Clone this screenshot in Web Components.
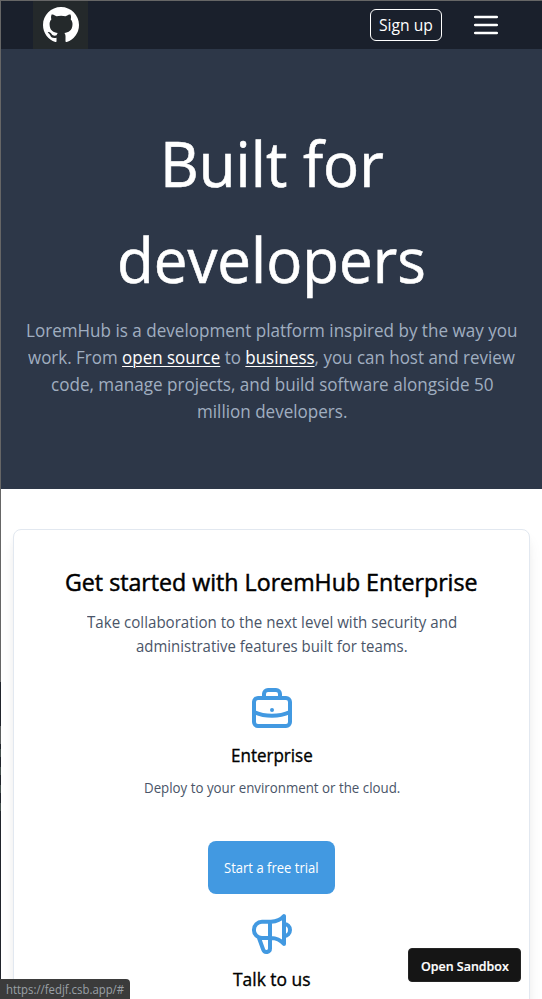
<!DOCTYPE html>
<html lang="en"><head><meta charset="utf-8"><title>LoremHub</title>
<style>html,body{margin:0;height:999px;overflow:hidden;background:#fff;font-family:"Open Sans","Noto Sans",sans-serif}</style></head>
<body><hub-page></hub-page>
<script>
const define = (name, html) => customElements.define(name, class extends HTMLElement {
  constructor(){ super(); this.attachShadow({mode:'open'}).innerHTML = html; }
});

// One line of text, condensed horizontally to the width given in `w`.
customElements.define('text-line', class extends HTMLElement {
  constructor(){
    super();
    this.attachShadow({mode:'open'}).innerHTML = `<style>:host{display:block;margin:0 auto}span{display:inline-block;white-space:nowrap;transform-origin:0 0;vertical-align:top}</style><span><slot></slot></span>`;
  }
  connectedCallback(){
    const s = +this.getAttribute('s'), w = +this.getAttribute('w'), lh = this.getAttribute('lh') || s*1.5;
    const k = s * 0.98, span = this.shadowRoot.querySelector('span');
    this.style.cssText = `width:${w}px;height:${lh}px;line-height:${lh}px;font-size:${k}px;text-align:left`;
    const dy = s > 60 ? 2 : 0;
    span.style.transform = `translateY(${dy}px) scaleX(${w / span.offsetWidth})`;
  }
});

define('hub-logo', `<style>:host{display:flex;width:55px;height:48px;background:#24292b;align-items:center;justify-content:center}</style>
<svg width="36" height="36" viewBox="0 0 16 16" fill="#fff"><path d="M8 0C3.58 0 0 3.58 0 8c0 3.54 2.29 6.53 5.47 7.59.4.07.55-.17.55-.38 0-.19-.01-.82-.01-1.49-2.01.37-2.53-.49-2.69-.94-.09-.23-.48-.94-.82-1.13-.28-.15-.68-.52-.01-.53.63-.01 1.08.58 1.23.82.72 1.21 1.87.87 2.33.66.07-.52.28-.87.51-1.07-1.78-.2-3.64-.89-3.64-3.95 0-.87.31-1.59.82-2.15-.08-.2-.36-1.02.08-2.12 0 0 .67-.21 2.2.82.64-.18 1.32-.27 2-.27s1.36.09 2 .27c1.53-1.04 2.2-.82 2.2-.82.44 1.1.16 1.92.08 2.12.51.56.82 1.27.82 2.15 0 3.07-1.87 3.75-3.65 3.95.29.25.54.73.54 1.48 0 1.07-.01 1.93-.01 2.2 0 .21.15.46.55.38A8.01 8.01 0 0 0 16 8c0-4.42-3.58-8-8-8z"/></svg>`);

define('nav-bar', `<style>:host{display:flex;height:48px;background:#1a202c;align-items:center;padding:0 44px 0 32px;color:#fff}
button{font:inherit;color:inherit;background:none;border:1px solid #fff;border-radius:6px;width:72px;height:32px;box-sizing:border-box;padding:0;margin:0 32px 0 auto}
svg{display:block}</style>
<hub-logo></hub-logo><button><text-line s="16" w="54" lh="29">Sign up</text-line></button>
<svg width="24" height="24" stroke="#fff" stroke-width="2.6" stroke-linecap="round"><path d="M1.200 4h21.600M1.200 12h21.600M1.200 20h21.600"/></svg>`);

define('hero-banner', `<style>:host{display:block;background:#2d3748;height:440px;box-sizing:border-box;padding-top:64px;color:#fff}
p{margin:12px 0 0;color:#a0aec0}h1{font-weight:400;margin:0;-webkit-text-stroke:.6px #fff}a{color:#fff;text-decoration:underline;text-decoration-thickness:1px;text-underline-offset:2px}</style>
<h1><text-line s="64" w="224">Built for</text-line><text-line s="64" w="309">developers</text-line></h1>
<p><text-line s="18" w="491">LoremHub is a development platform inspired by the way you</text-line>
<text-line s="18" w="487">work. From <a>open source</a> to <a>business</a>, you can host and review</text-line>
<text-line s="18" w="442">code, manage projects, and build software alongside 50</text-line>
<text-line s="18" w="150">million developers.</text-line></p>`);

define('line-icon', `<style>:host{display:block;width:40px;height:40px;margin:0 auto}::slotted(svg){display:block}</style><slot></slot>`);

define('feature-item', `<style>:host{display:block}h3{font-weight:500;margin:14px 0 0;color:#000;-webkit-text-stroke:.35px #000}</style><slot name="icon"></slot><h3><slot name="title"></slot></h3><slot></slot>`);

define('start-card', `<style>:host{display:block;margin:40px 12px 0;box-sizing:border-box;height:700px;border:1px solid #e2e8f0;border-radius:8px;box-shadow:0 10px 15px -3px #0000001a,0 4px 6px -2px #0000000d;background:#fff;padding-top:34px}
h2{font-weight:500;margin:0;color:#000;-webkit-text-stroke:.5px #000}.muted{color:#4a5568}.lead{margin:10px 0 30px}
button{display:block;border:0;background:#4299e1;color:#fff;border-radius:8px;width:127px;height:53px;margin:43px auto 18px;padding:0;font:inherit}
.desc{margin-top:8px}svg{overflow:visible;fill:none;stroke:#4299e1;stroke-width:4;stroke-linejoin:round;stroke-linecap:round}</style>
<h2><text-line s="24" w="413">Get started with LoremHub Enterprise</text-line></h2>
<div class="muted lead"><text-line s="16" w="370">Take collaboration to the next level with security and</text-line><text-line s="16" w="272">administrative features built for teams.</text-line></div>
<feature-item><line-icon slot="icon"><svg width="40" height="40"><rect x="2" y="10" width="36" height="28" rx="4"/><path d="M12 10V6a4 4 0 0 1 4-4h8a4 4 0 0 1 4 4v4M2 24c11 5 25 5 36 0M20 22h.01"/></svg></line-icon>
<text-line slot="title" s="18" w="82">Enterprise</text-line>
<div class="muted desc"><text-line s="14" w="256">Deploy to your environment or the cloud.</text-line></div></feature-item>
<button><text-line s="14" w="95">Start a free trial</text-line></button>
<feature-item><line-icon slot="icon"><svg width="40" height="40" viewBox="0 -2 40 40"><path d="M32 2v28c-3.500-4-8-6-13-6h-9a8 8 0 0 1 0-16.200h9C24 7.500 29 5.500 32 2zM18 8v26.500a3.500 3.500 0 0 1-6.800 1.200L7 24M32 10a6 6 0 0 1 0 12"/></svg></line-icon>
<text-line slot="title" s="18" w="77">Talk to us</text-line></feature-item>`);

define('sandbox-button', `<style>:host{position:absolute;left:408px;top:948px;width:113px;height:34px;box-sizing:border-box;border:1px solid #242424;border-radius:4px;background:#151515;color:#fff;font-weight:600;padding-top:1px;-webkit-text-stroke:.2px #fff}</style><text-line s="13" w="88" lh="32">Open Sandbox</text-line>`);
define('status-tip', `<style>:host{position:absolute;left:0;top:979px;width:130px;height:20px;background:#3b3b3b;border-radius:0 4px 0 0;color:#9aa0a6}</style><text-line s="12" w="118" lh="20">https://fedjf.csb.app/#</text-line>`);
define('window-edge', `<style>:host{position:absolute;left:0;top:0;width:1px;height:999px;background:linear-gradient(#666 682px,#20242b 682px 726px,#5c5f5f 726px 744px,#20242b 744px 749px,#44504d 749px 757px,#20242b 757px 767px,#44504d 767px 775px,#20242b 775px 785px,#44504d 785px 793px,#20242b 793px 803px,#44504d 803px 811px,#20242b 811px)}</style>`);
define('hub-page', `<style>:host{display:block;position:relative;box-sizing:border-box;width:542px;height:999px;overflow:hidden;background:#fff;border-top:1px solid #666}main{padding-left:1px}.over{position:absolute;left:0;top:-1px}</style>
<main><nav-bar></nav-bar><hero-banner></hero-banner><start-card></start-card></main><div class="over"><window-edge></window-edge><sandbox-button></sandbox-button><status-tip></status-tip></div>`);
</script></body></html>
